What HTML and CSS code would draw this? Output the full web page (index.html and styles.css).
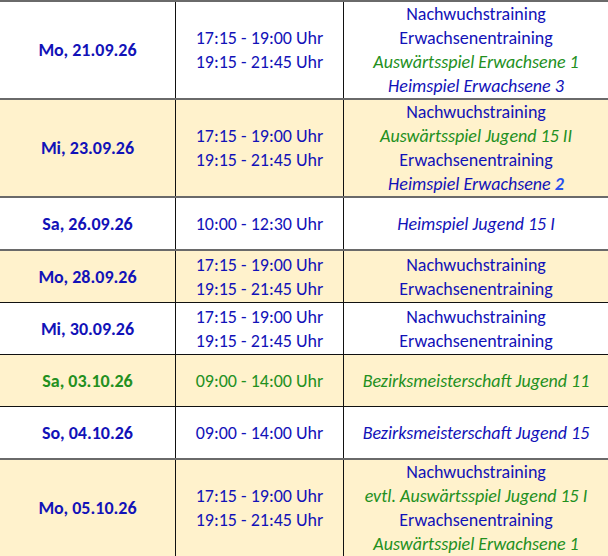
FILE: index.html
```html
<!DOCTYPE html>
<html lang="de">
<head>
<meta charset="utf-8">
<title>Trainingsplan</title>
<link rel="stylesheet" href="styles.css">
</head>
<body>
<div class="plan">
  <div class="row white top-g">
    <div class="cell date">Mo, 21.09.26</div>
    <div class="cell time"><span>17:15 - 19:00 Uhr</span><span>19:15 - 21:45 Uhr</span></div>
    <div class="cell act">
      <span>Nachwuchstraining</span>
      <span>Erwachsenentraining</span>
      <span class="away">Auswärtsspiel Erwachsene 1</span>
      <span class="home">Heimspiel Erwachsene 3</span>
    </div>
  </div>
  <div class="row cream top-g">
    <div class="cell date">Mi, 23.09.26</div>
    <div class="cell time"><span>17:15 - 19:00 Uhr</span><span>19:15 - 21:45 Uhr</span></div>
    <div class="cell act">
      <span>Nachwuchstraining</span>
      <span class="away">Auswärtsspiel Jugend 15 II</span>
      <span>Erwachsenentraining</span>
      <span class="home">Heimspiel Erwachsene <b class="fix">2</b></span>
    </div>
  </div>
  <div class="row white top-g">
    <div class="cell date">Sa, 26.09.26</div>
    <div class="cell time"><span>10:00 - 12:30 Uhr</span></div>
    <div class="cell act"><span class="home">Heimspiel Jugend 15 I</span></div>
  </div>
  <div class="row cream top-g">
    <div class="cell date">Mo, 28.09.26</div>
    <div class="cell time"><span>17:15 - 19:00 Uhr</span><span>19:15 - 21:45 Uhr</span></div>
    <div class="cell act"><span>Nachwuchstraining</span><span>Erwachsenentraining</span></div>
  </div>
  <div class="row white top-b">
    <div class="cell date">Mi, 30.09.26</div>
    <div class="cell time"><span>17:15 - 19:00 Uhr</span><span>19:15 - 21:45 Uhr</span></div>
    <div class="cell act"><span>Nachwuchstraining</span><span>Erwachsenentraining</span></div>
  </div>
  <div class="row cream top-b green">
    <div class="cell date">Sa, 03.10.26</div>
    <div class="cell time"><span>09:00 - 14:00 Uhr</span></div>
    <div class="cell act"><span class="away">Bezirksmeisterschaft Jugend 11</span></div>
  </div>
  <div class="row white top-b">
    <div class="cell date">So, 04.10.26</div>
    <div class="cell time"><span>09:00 - 14:00 Uhr</span></div>
    <div class="cell act"><span class="home">Bezirksmeisterschaft Jugend 15</span></div>
  </div>
  <div class="row cream top-g">
    <div class="cell date">Mo, 05.10.26</div>
    <div class="cell time"><span>17:15 - 19:00 Uhr</span><span>19:15 - 21:45 Uhr</span></div>
    <div class="cell act">
      <span>Nachwuchstraining</span>
      <span class="away">evtl. Auswärtsspiel Jugend 15 I</span>
      <span>Erwachsenentraining</span>
      <span class="away">Auswärtsspiel Erwachsene 1</span>
    </div>
  </div>
</div>
</body>
</html>
```

FILE: styles.css
```css
html, body {
  margin: 0;
  padding: 0;
  background: #ffffff;
}

.plan {
  width: 608px;
  font-family: Carlito, Calibri, Lato, "Noto Sans", sans-serif;
  font-size: 18px;
  line-height: 24px;
  color: #1212b8;
}

.row {
  display: grid;
  grid-template-columns: 176px 168px 264px;
}

.row.white { background: #ffffff; }
.row.cream { background: #fff2cc; }

.row.top-g { border-top: 2px solid #6a6a6a; }
.row.top-b { border-top: 1px solid #111111; }

.cell {
  display: flex;
  flex-direction: column;
  justify-content: center;
  align-items: center;
  text-align: center;
  min-height: 51px;
  white-space: nowrap;
}

.cell.date,
.cell.time {
  border-right: 1px solid #111111;
}

.cell.date {
  font-weight: 700;
}

.cell.act span {
  display: block;
}

.away {
  color: #23901e;
  font-style: italic;
}

.home {
  color: #1212b8;
  font-style: italic;
}

.row.green .date,
.row.green .time {
  color: #23901e;
}

.fix {
  color: #2a52ee;
  font-weight: 700;
  font-style: italic;
}
```
